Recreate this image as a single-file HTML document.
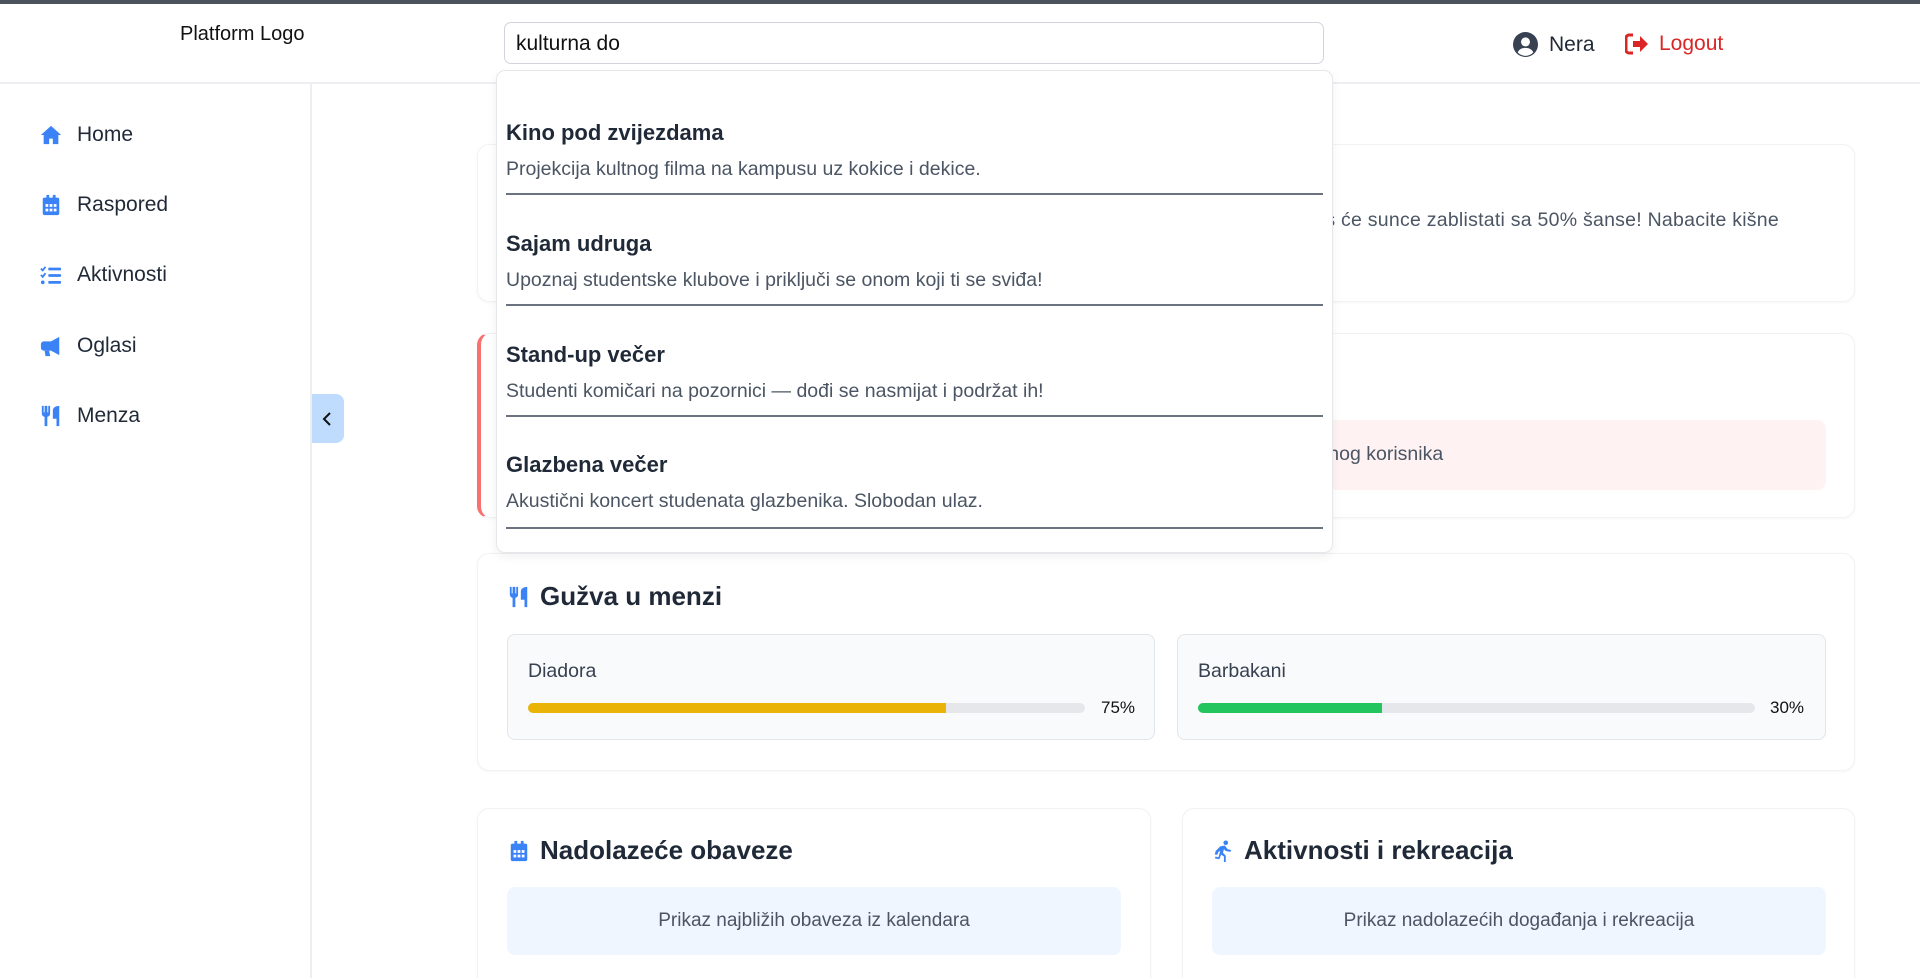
<!DOCTYPE html>
<html style="overflow:hidden;height:978px"><head><meta charset="utf-8"><style>
*{box-sizing:border-box;margin:0;padding:0}
body{width:1920px;height:978px;overflow:hidden;background:#fff;font-family:"Liberation Sans",sans-serif;color:#1f2937;position:relative}
.abs{position:absolute}
.topbar{left:0;top:0;width:1920px;height:4px;background:#4b535d}
.header{left:0;top:4px;width:1920px;height:80px;border-bottom:2px solid #eceef1;background:#fff}
.logo{left:180px;top:23px;font-size:20px;color:#111}
.search{left:504px;top:22px;width:820px;height:42px;border:1px solid #d1d5db;border-radius:7px;font-size:21px;padding:9px 11px;color:#111}
.nav{left:0;top:84px;width:312px;height:894px;border-right:2px solid #eceef1}
.item{position:absolute;left:40px;font-size:21px;color:#1f2937;display:flex;align-items:center}
.item svg{width:22px;height:22px;margin-right:15px}
.toggle{left:312px;top:394px;width:32px;height:49px;background:#bfdbfe;border-radius:0 8px 8px 0}
.card{position:absolute;background:#fff;border:1px solid #f1f2f4;border-radius:12px;box-shadow:0 1px 3px rgba(0,0,0,.04)}
.h{position:absolute;font-size:26px;font-weight:bold;color:#1f2937;display:flex;align-items:center}
.h svg{margin-right:10px}
.sub{position:absolute;background:#f9fafb;border:1px solid #e2e5ea;border-radius:8px}
.bar{position:absolute;height:10px;background:#e5e7eb;border-radius:5px;overflow:hidden}
.box{position:absolute;background:#eff6ff;border-radius:8px;font-size:19px;color:#4b5563;text-align:center;line-height:68px}
.dd{left:496px;top:70px;width:837px;height:483px;background:#fff;border:1px solid #e5e7eb;border-radius:9px;box-shadow:0 4px 10px rgba(0,0,0,.06)}
.di{position:absolute;left:9px;width:817px;border-bottom:2px solid #6b7280;height:0}
.dt{position:absolute;left:9px;font-size:22px;font-weight:bold;color:#1f2937}
.ds{position:absolute;left:9px;font-size:19.5px;color:#4b5563}
</style></head><body>
<div class="abs topbar"></div>
<div class="abs header"></div>
<div class="abs logo">Platform Logo</div>
<div class="abs search">kulturna do</div>
<div class="abs" style="left:1513px;top:32px;display:flex;align-items:center;font-size:21px;color:#1f2937">
<svg width="25" height="25" viewBox="0 0 24 24"><circle cx="12" cy="12" r="12" fill="#374151"/><circle cx="12" cy="9.5" r="4.3" fill="#fff"/><path d="M4.5 19.5c1.5-3 4-4.3 7.5-4.3s6 1.3 7.5 4.3A10 10 0 0 1 4.5 19.5z" fill="#fff"/></svg>
<span style="margin-left:11px">Nera</span></div>
<div class="abs" style="left:1625px;top:32px;display:flex;align-items:center;font-size:21px;color:#dc2626">
<svg width="24" height="22" viewBox="0 0 24 22"><path d="M8 2H4a3 3 0 0 0-3 3v12a3 3 0 0 0 3 3h4" stroke="#dc2626" stroke-width="3" fill="none"/><path d="M8 8h7V3l8 8-8 8v-5H8z" fill="#dc2626"/></svg>
<span style="margin-left:10px">Logout</span></div>

<div class="abs nav"></div>
<div class="item" style="top:123px"><svg viewBox="0 0 24 24"><path d="M12 2L1 12h3v10h6v-6h4v6h6V12h3z" fill="#3b82f6"/></svg>Home</div>
<div class="item" style="top:193px"><svg viewBox="0 0 24 24"><rect x="3" y="4" width="18" height="19" rx="2" fill="#3b82f6"/><rect x="7" y="1" width="3" height="5" fill="#3b82f6"/><rect x="14" y="1" width="3" height="5" fill="#3b82f6"/><g fill="#fff"><rect x="6" y="11" width="3" height="3"/><rect x="10.5" y="11" width="3" height="3"/><rect x="15" y="11" width="3" height="3"/><rect x="6" y="16" width="3" height="3"/><rect x="10.5" y="16" width="3" height="3"/><rect x="15" y="16" width="3" height="3"/></g></svg>Raspored</div>
<div class="item" style="top:263px"><svg viewBox="0 0 24 24"><path d="M1 5l2 2 3-4" stroke="#3b82f6" stroke-width="2" fill="none"/><path d="M1 12l2 2 3-4" stroke="#3b82f6" stroke-width="2" fill="none"/><circle cx="3" cy="20" r="2" fill="#3b82f6"/><rect x="9" y="4" width="14" height="3" rx="1" fill="#3b82f6"/><rect x="9" y="11" width="14" height="3" rx="1" fill="#3b82f6"/><rect x="9" y="18.5" width="14" height="3" rx="1" fill="#3b82f6"/></svg>Aktivnosti</div>
<div class="item" style="top:334px"><svg viewBox="0 0 24 24"><path d="M21 2v20l-9-5H4a3 3 0 0 1-3-3V10a3 3 0 0 1 3-3h8z" fill="#3b82f6"/><path d="M5 17h5l1 6H6z" fill="#3b82f6"/></svg>Oglasi</div>
<div class="item" style="top:404px"><svg viewBox="0 0 24 24"><path d="M2 1v8a4 4 0 0 0 3 4v10h3V13a4 4 0 0 0 3-4V1H9v7H8V1H5v7H4V1z" fill="#3b82f6"/><path d="M14 15V6c0-3 3-5 7-5v22h-3v-8z" fill="#3b82f6"/></svg>Menza</div>
<div class="abs toggle"><svg style="position:absolute;left:10px;top:18px" width="10" height="14" viewBox="0 0 10 14"><path d="M8 1L2 7l6 6" stroke="#111" stroke-width="2" fill="none"/></svg></div>

<div class="card" style="left:477px;top:144px;width:1378px;height:158px;overflow:hidden">
<div class="abs" style="right:75px;top:64px;font-size:19.5px;letter-spacing:0.25px;color:#4b5563;white-space:nowrap">Vremenska prognoza: danas će sunce zablistati sa 50% šanse! Nabacite kišne</div></div>
<div class="card" style="left:477px;top:333px;width:1378px;height:185px;border-left:4px solid #f87171;overflow:hidden">
<div class="abs" style="left:30px;top:86px;width:1315px;height:70px;background:#fef2f2;border-radius:9px"></div>
<div class="abs" style="left:624px;top:109px;font-size:19.5px;color:#4b5563">Nema obaveza za odabranog korisnika</div></div>

<div class="card" style="left:477px;top:553px;width:1378px;height:218px"></div>
<div class="h" style="left:508px;top:581px"><svg width="22" height="26" viewBox="0 0 24 24"><path d="M2 1v8a4 4 0 0 0 3 4v10h3V13a4 4 0 0 0 3-4V1H9v7H8V1H5v7H4V1z" fill="#3b82f6"/><path d="M14 15V6c0-3 3-5 7-5v22h-3v-8z" fill="#3b82f6"/></svg>Gužva u menzi</div>
<div class="sub" style="left:507px;top:634px;width:648px;height:106px"></div>
<div class="abs" style="left:528px;top:660px;font-size:19.5px;color:#374151">Diadora</div>
<div class="bar" style="left:528px;top:703px;width:557px"><div style="width:75%;height:100%;background:#eab308"></div></div>
<div class="abs" style="left:1101px;top:698px;font-size:17px;color:#111">75%</div>
<div class="sub" style="left:1177px;top:634px;width:649px;height:106px"></div>
<div class="abs" style="left:1198px;top:660px;font-size:19.5px;color:#374151">Barbakani</div>
<div class="bar" style="left:1198px;top:703px;width:557px"><div style="width:33%;height:100%;background:#22c55e"></div></div>
<div class="abs" style="left:1770px;top:698px;font-size:17px;color:#111">30%</div>

<div class="card" style="left:477px;top:808px;width:674px;height:170px;border-bottom:none;border-radius:12px 12px 0 0"></div>
<div class="card" style="left:1182px;top:808px;width:673px;height:170px;border-bottom:none;border-radius:12px 12px 0 0"></div>
<div class="h" style="left:508px;top:835px"><svg width="22" height="26" viewBox="0 0 24 24"><rect x="3" y="4" width="18" height="19" rx="2" fill="#3b82f6"/><rect x="7" y="1" width="3" height="5" fill="#3b82f6"/><rect x="14" y="1" width="3" height="5" fill="#3b82f6"/><g fill="#fff"><rect x="6" y="11" width="3" height="3"/><rect x="10.5" y="11" width="3" height="3"/><rect x="15" y="11" width="3" height="3"/><rect x="6" y="16" width="3" height="3"/><rect x="10.5" y="16" width="3" height="3"/><rect x="15" y="16" width="3" height="3"/></g></svg>Nadolazeće obaveze</div>
<div class="h" style="left:1212px;top:835px"><svg width="22" height="26" viewBox="0 0 24 24"><circle cx="15" cy="3" r="2.5" fill="#3b82f6"/><path d="M9 7l5-1 3 4 4 1-1 2-5-1-2-2-1 4 3 3v7h-2v-6l-3-2-2 5-5-1 1-2 3 1 2-7-2 1-1 3H3l1-4z" fill="#3b82f6"/></svg>Aktivnosti i rekreacija</div>
<div class="box" style="left:507px;top:887px;width:614px;height:68px">Prikaz najbližih obaveza iz kalendara</div>
<div class="box" style="left:1212px;top:887px;width:614px;height:68px">Prikaz nadolazećih događanja i rekreacija</div>

<div class="abs dd">
<div class="dt" style="top:49px">Kino pod zvijezdama</div>
<div class="ds" style="top:87px">Projekcija kultnog filma na kampusu uz kokice i dekice.</div>
<div class="di" style="top:122px"></div>
<div class="dt" style="top:160px">Sajam udruga</div>
<div class="ds" style="top:198px">Upoznaj studentske klubove i priključi se onom koji ti se sviđa!</div>
<div class="di" style="top:233px"></div>
<div class="dt" style="top:271px">Stand-up večer</div>
<div class="ds" style="top:309px">Studenti komičari na pozornici — dođi se nasmijat i podržat ih!</div>
<div class="di" style="top:344px"></div>
<div class="dt" style="top:381px">Glazbena večer</div>
<div class="ds" style="top:419px">Akustični koncert studenata glazbenika. Slobodan ulaz.</div>
<div class="di" style="top:456px"></div>
</div>
</body></html>
